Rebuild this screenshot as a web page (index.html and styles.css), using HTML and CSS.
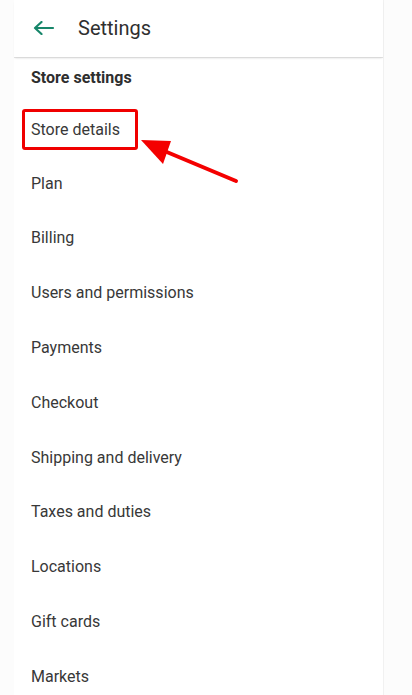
FILE: index.html
```html
<!DOCTYPE html>
<html lang="en">
<head>
  <meta charset="UTF-8" />
  <meta name="viewport" content="width=device-width, initial-scale=1.0"/>
  <title>Settings</title>
  <link rel="stylesheet" href="styles.css">
</head>
<body>
  <div class="panel">
    <header class="topbar">
      <svg class="back" width="22" height="14" viewBox="0 0 22 14" aria-hidden="true">
        <path d="M2 7h18M8.5 1L2 7l6.5 6" fill="none" stroke="#17866a" stroke-width="2.2" stroke-linecap="round" stroke-linejoin="round"/>
      </svg>
      <h1>Settings</h1>
    </header>

    <h2 class="group-title">Store settings</h2>

    <ul class="settings-list">
      <li><span class="highlight">Store details</span></li>
      <li>Plan</li>
      <li>Billing</li>
      <li>Users and permissions</li>
      <li>Payments</li>
      <li>Checkout</li>
      <li>Shipping and delivery</li>
      <li>Taxes and duties</li>
      <li>Locations</li>
      <li>Gift cards</li>
      <li>Markets</li>
    </ul>
  </div>

  <!-- annotation arrow pointing at the highlighted row -->
  <svg class="pointer" width="412" height="695" viewBox="0 0 412 695" aria-hidden="true">
    <line x1="236" y1="181" x2="162" y2="150" stroke="#f40000" stroke-width="4" stroke-linecap="round"/>
    <polygon points="141,140 171,141 163,164" fill="#f40000"/>
  </svg>
</body>
</html>
```

FILE: styles.css
```css
* {
  box-sizing: border-box;
}

body {
  margin: 0;
  height: 695px;
  overflow: hidden;
  background: #fcfcfc;
  font-family: Roboto, 'Noto Sans', sans-serif;
  color: #333;
}

.panel {
  margin-left: 14px;
  width: 370px;
  min-height: 695px;
  background: #fff;
  border-right: 1px solid #f1f1f1;
}

.topbar {
  display: flex;
  align-items: center;
  height: 57px;
  padding-left: 19px;
  padding-bottom: 1px;
  box-shadow: 0 2px 2px -1px #d6d6d6, 0 1px 0 #e2e2e2;
}

.back {
  flex: none;
}

.topbar h1 {
  margin: 0 0 0 23px;
  font-size: 20px;
  font-weight: 400;
  color: #2f2f2f;
}

.group-title {
  margin: 0;
  padding: 11px 17px 13px;
  line-height: 20px;
  font-size: 16px;
  font-weight: 700;
  color: #2e2e2e;
}

.settings-list {
  margin: 0;
  padding: 0;
  list-style: none;
}

.settings-list li {
  display: flex;
  align-items: center;
  height: 54.8px;
  padding-left: 17px;
  font-size: 16px;
  color: #383838;
}

.highlight {
  display: inline-block;
  width: 116px;
  margin: 3px 0 0 -9px;
  padding: 9px 6px 8px;
  line-height: 18px;
  border: 3px solid #f00000;
  border-radius: 3px;
}

.pointer {
  position: absolute;
  top: 0;
  left: 0;
  pointer-events: none;
}
```
